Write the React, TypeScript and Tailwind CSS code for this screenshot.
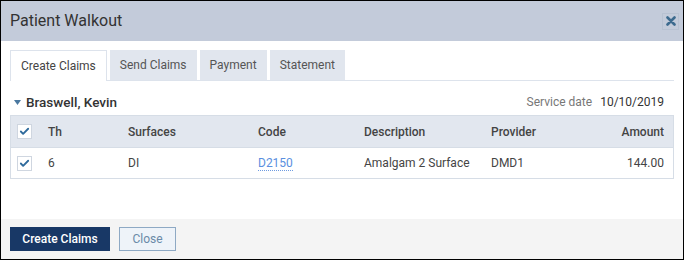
import { Check } from "lucide-react";

const tabs = ["Create Claims", "Send Claims", "Payment", "Statement"];

function Box() {
  return (
    <span className="flex h-[15px] w-[15px] items-center justify-center border border-[#cfd6e0] bg-white">
      <Check size={11} strokeWidth={4} className="text-[#2e6a9c]" />
    </span>
  );
}

export default function App() {
  return (
    <div
      className="flex h-[260px] w-[684px] flex-col border border-black bg-white text-[12px] text-[#333]"
      style={{ fontFamily: "Roboto, 'Liberation Sans', sans-serif" }}
    >
      {/* Header */}
      <div className="flex h-[40px] items-center justify-between bg-[#c3cbda] pl-[9px] pr-[4px]">
        <span className="text-[16px] text-[#333]">Patient Walkout</span>
        <button className="flex h-[17px] w-[17px] items-center justify-center border border-[#b8c2d2] text-[#3c6a8e]">
          <svg width="10" height="10" viewBox="0 0 10 10">
            <path d="M1.5 1.5 L8.5 8.5 M8.5 1.5 L1.5 8.5" stroke="currentColor" strokeWidth="2.6" strokeLinecap="round" />
          </svg>
        </button>
      </div>

      {/* Body */}
      <div className="flex-1 px-[9px] pt-[10px]">
        <div className="flex h-[30px] items-end gap-[3px] border-b border-[#dde3ec]">
          {tabs.map((t, i) => (
            <div
              key={t}
              className={
                i === 0
                  ? "-mb-px flex h-[31px] items-center border border-b-0 border-[#dde3ec] bg-white px-[10px] text-[#444]"
                  : "flex h-[30px] items-center bg-[#e1e6ee] px-[10px] text-[#555]"
              }
            >
              {t}
            </div>
          ))}
        </div>

        <div className="flex h-[34px] items-center justify-between pl-[4px] pr-[10px] pt-[8px]">
          <div className="flex items-center gap-[5px]">
            <svg width="7" height="5" viewBox="0 0 7 5">
              <path d="M0 0 H7 L3.5 5 Z" fill="#4a78a0" />
            </svg>
            <span className="text-[13.5px] font-medium text-[#333]">Braswell, Kevin</span>
          </div>
          <div className="flex items-center gap-[8px]">
            <span className="text-[#777]">Service date</span>
            <span className="text-[#333]">10/10/2019</span>
          </div>
        </div>

        <div className="border border-[#d6dde6]">
          <div className="flex h-[31px] items-center bg-[#e2e7ef] font-medium text-[#444]">
            <div className="w-[37px] pl-[6px]"><Box /></div>
            <div className="w-[80px]">Th</div>
            <div className="w-[130px]">Surfaces</div>
            <div className="w-[106px]">Code</div>
            <div className="w-[127px]">Description</div>
            <div className="w-[80px]">Provider</div>
            <div className="flex-1 pr-[9px] text-right">Amount</div>
          </div>
          <div className="flex h-[31px] items-center border-t border-[#d6dde6] text-[#444]">
            <div className="w-[37px] pl-[6px]"><Box /></div>
            <div className="w-[80px]">6</div>
            <div className="w-[130px]">DI</div>
            <div className="w-[106px]">
              <span className="border-b border-dotted border-[#6f9be0] text-[#5a8fe0]">D2150</span>
            </div>
            <div className="w-[127px]">Amalgam 2 Surface</div>
            <div className="w-[80px]">DMD1</div>
            <div className="flex-1 pr-[9px] text-right">144.00</div>
          </div>
        </div>
      </div>

      {/* Footer */}
      <div className="flex h-[40px] items-center gap-[9px] bg-[#f4f4f4] px-[9px]">
        <button className="h-[24px] w-[100px] bg-[#183866] font-medium text-white">Create Claims</button>
        <button className="h-[24px] w-[57px] border border-[#8ea9c4] bg-[#eef3f9] text-[#6a8aa8]">Close</button>
      </div>
    </div>
  );
}
